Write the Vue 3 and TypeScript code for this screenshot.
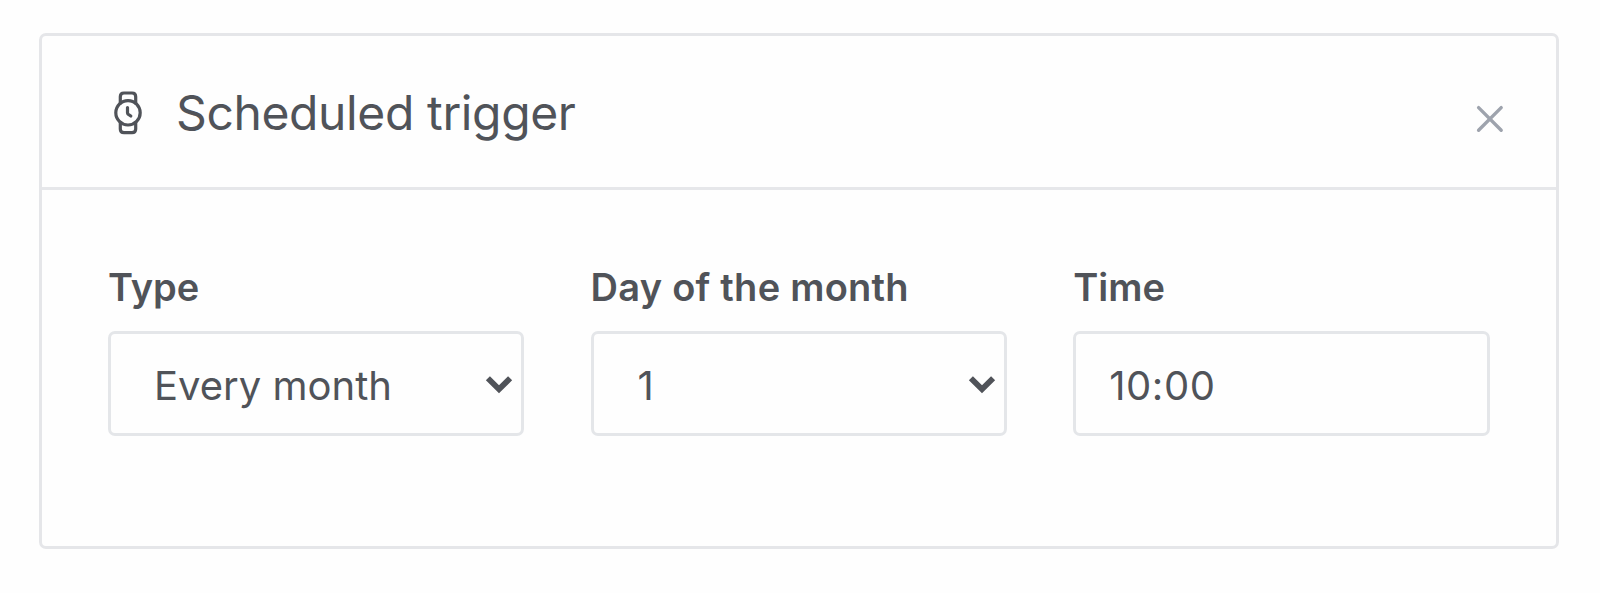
<script setup lang="ts">
interface Field {
  id: string
  label: string
  value: string
  kind: 'select' | 'input'
}

const fields: Field[] = [
  { id: 'type', label: 'Type', value: 'Every month', kind: 'select' },
  { id: 'day', label: 'Day of the month', value: '1', kind: 'select' },
  { id: 'time', label: 'Time', value: '10:00', kind: 'input' },
]
</script>

<template>
  <main class="page">
    <section class="card">
      <header class="head">
        <svg class="watch" viewBox="0 0 32 46" fill="none" aria-hidden="true">
          <g stroke="currentColor" stroke-width="3.2" stroke-linecap="round" stroke-linejoin="round">
            <circle cx="16" cy="22.8" r="12.2" />
            <path d="M8.3 13.2V6.7Q8.3 3 12 3H20Q23.7 3 23.7 6.7V13.2" />
            <path d="M8.3 32.4V38.9Q8.3 42.6 12 42.6H20Q23.7 42.6 23.7 38.9V32.4" />
            <path d="M15.5 17.6V22.8Q15.5 23.6 16.2 24.2L18.8 26" />
          </g>
        </svg>
        <h1 class="title">Scheduled trigger</h1>
        <button class="close" type="button" aria-label="Close">
          <svg viewBox="0 0 28 28" fill="none" aria-hidden="true">
            <path d="M2.6 2.6L25.2 25.2M25.2 2.6L2.6 25.2" stroke="currentColor" stroke-width="3.4" stroke-linecap="round" />
          </svg>
        </button>
      </header>
      <div class="fields">
        <div v-for="field in fields" :key="field.id" class="field">
          <div class="label" :class="`label-${field.id}`">{{ field.label }}</div>
          <div class="control" :class="field.kind">
            <span class="value" :class="`value-${field.id}`">{{ field.value }}</span>
            <svg v-if="field.kind === 'select'" class="chevron" viewBox="0 0 28 20" fill="none" aria-hidden="true">
              <path d="M2.9 3.3L14 14.2L25.1 3.3" stroke="currentColor" stroke-width="5.8" />
            </svg>
          </div>
        </div>
      </div>
    </section>
  </main>
</template>

<style>
body {
  background: #fefefe;
}
</style>

<style scoped>
.page {
  box-sizing: border-box;
  height: 593px;
  padding: 33px 41px 44px 39px;
  background: #fefefe;
  color: #505359;
  font-family: Inter, "Liberation Sans", sans-serif;
}
.card {
  box-sizing: border-box;
  height: 516px;
  border: 3px solid #e5e6e9;
  border-radius: 7px;
}
.head {
  box-sizing: border-box;
  display: flex;
  align-items: center;
  height: 154px;
  padding: 0 52px 0 70px;
  border-bottom: 3px solid #e6e7ea;
}
.watch {
  width: 32px;
  height: 46px;
  margin-top: 2px;
}
.title {
  margin: 2px 0 0 32px;
  font-size: 48px;
  line-height: 60px;
  font-weight: 400;
  letter-spacing: -0.38px;
  white-space: nowrap;
}
.close {
  width: 28px;
  height: 28px;
  margin: 14px 0 0 auto;
  padding: 0;
  border: 0;
  background: none;
  color: #9ea3ad;
}
.close svg {
  display: block;
}
.fields {
  display: grid;
  grid-template-columns: repeat(3, 416.4px);
  column-gap: 66.2px;
  padding: 73px 0 0 66px;
}
.label {
  height: 48px;
  margin-bottom: 20px;
  font-size: 38px;
  line-height: 48px;
  font-weight: 600;
  white-space: nowrap;
}
.label-day {
  letter-spacing: 0.25px;
}
.control {
  box-sizing: border-box;
  display: flex;
  align-items: center;
  height: 105px;
  border: 3px solid #e4e6e9;
  border-radius: 7px;
  font-size: 40px;
  line-height: 48px;
  white-space: nowrap;
}
.value {
  margin-top: 4px;
}
.value-day {
  padding-left: 1px;
}
.value-time {
  letter-spacing: 0.6px;
}
.select {
  padding: 0 8px 0 43px;
}
.input {
  padding-left: 33px;
}
.chevron {
  width: 28px;
  height: 20px;
  margin: 2px 0 0 auto;
}
</style>
